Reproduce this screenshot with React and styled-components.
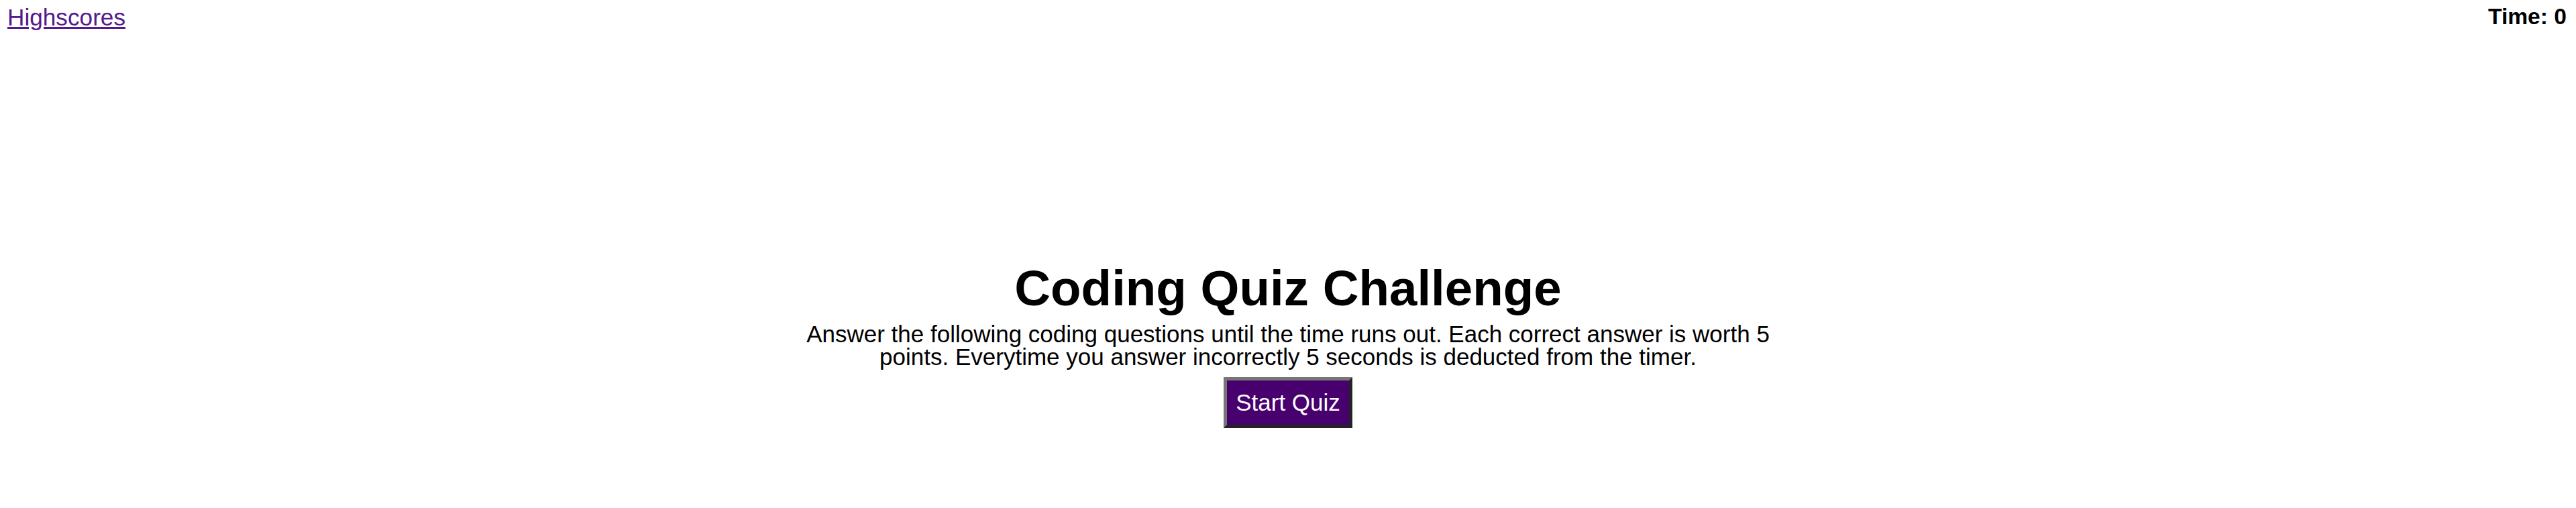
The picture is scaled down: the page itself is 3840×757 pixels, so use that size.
import React, { useState } from 'react';
import styled, { createGlobalStyle } from 'styled-components';

const GlobalStyle = createGlobalStyle`
    html, body {
        margin: 0;
        padding: 0;
        background: #ffffff;
    }
    body {
        font-family: "Liberation Sans", Arial, sans-serif;
        font-size: 35px;
        color: #000000;
    }
`;

const Header = styled.header`
    display: flex;
    justify-content: space-between;
    align-items: flex-start;
    padding: 6px 14px 0px 11px;
`;

const ScoresLink = styled.a`
    color: #551a8b;
    text-decoration: underline;
    font-size: 35.2px;
`;

const Timer = styled.div`
    font-weight: 700;
    font-size: 33.6px;
`;

const Main = styled.main`
    display: flex;
    flex-direction: column;
    align-items: center;
    padding-top: 341px;
`;

const Title = styled.h1`
    margin: 0px;
    font-size: 74.5px;
    font-weight: 700;
    text-align: center;
`;

const Intro = styled.p`
    max-width: 1500px;
    margin: 9px 0px 0px 0px;
    font-size: 35px;
    line-height: 34px;
    text-align: center;
`;

const StartButton = styled.button`
    margin-top: 13px;
    padding: 13px;
    font-family: "Liberation Sans", Arial, sans-serif;
    font-size: 35px;
    color: #ffffff;
    background: #48006e;
    border-style: solid;
    border-width: 5px;
    border-color: #767676 #232323 #232323 #767676;
    cursor: pointer;
`;

export default function App() {
    const [time] = useState(0);

    return (
        <>
            <GlobalStyle />
            <Header>
                <ScoresLink href="#">Highscores</ScoresLink>
                <Timer>Time: {time}</Timer>
            </Header>
            <Main>
                <Title>Coding Quiz Challenge</Title>
                <Intro>
                    Answer the following coding questions until the time runs out. Each correct answer is worth 5 points. Everytime you answer incorrectly 5 seconds is deducted from the timer.
                </Intro>
                <StartButton>Start Quiz</StartButton>
            </Main>
        </>
    )
}
